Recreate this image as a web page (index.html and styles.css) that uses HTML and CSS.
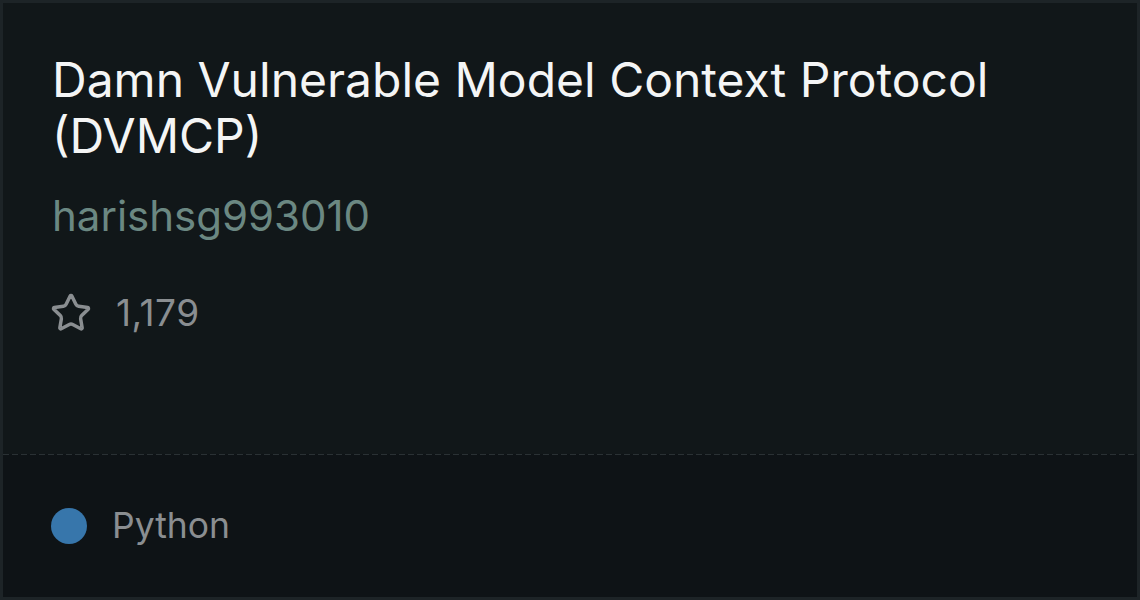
FILE: index.html
```html
<!DOCTYPE html>
<html>
<head>
<meta charset="utf-8">
<link rel="stylesheet" href="styles.css">
</head>
<body>
<div class="card">
  <div class="main">
    <h1 class="title">Damn Vulnerable Model Context Protocol (DVMCP)</h1>
    <div class="owner">harishsg993010</div>
    <div class="stars">
      <svg class="star" viewBox="0 0 24 24" width="42" height="42" fill="none" stroke="currentColor" stroke-width="2" stroke-linejoin="round" stroke-linecap="round">
        <path d="M11.525 2.295a.53.53 0 0 1 .95 0l2.31 4.679a2.123 2.123 0 0 0 1.595 1.16l5.166.756a.53.53 0 0 1 .294.904l-3.736 3.638a2.123 2.123 0 0 0-.611 1.878l.882 5.14a.53.53 0 0 1-.771.56l-4.618-2.428a2.122 2.122 0 0 0-1.973 0L6.396 21.01a.53.53 0 0 1-.77-.56l.881-5.139a2.122 2.122 0 0 0-.611-1.879L2.16 9.795a.53.53 0 0 1 .294-.906l5.165-.755a2.122 2.122 0 0 0 1.597-1.16z"/>
      </svg>
      <span class="count">1,179</span>
    </div>
  </div>
  <div class="footer">
    <span class="dot"></span>
    <span class="lang">Python</span>
  </div>
</div>
</body>
</html>
```
FILE: styles.css
```css
html, body {
  margin: 0;
  padding: 0;
  background: #1d2427;
}
.card {
  box-sizing: border-box;
  width: 1140px;
  height: 600px;
  border: 3px solid #1d2427;
  background: #111719;
  display: flex;
  flex-direction: column;
  font-family: Inter, "Noto Sans", sans-serif;
}
.main {
  flex: 1;
  padding: 49px 49px 0;
}
.title {
  margin: 0;
  font-size: 48px;
  font-weight: 400;
  line-height: 56px;
  color: #f4f5f5;
  max-width: 1000px;
}
.owner {
  margin-top: 28px;
  font-size: 42px;
  line-height: 48px;
  color: #6b8882;
}
.stars {
  margin-top: 52px;
  display: flex;
  align-items: center;
  gap: 24px;
  font-size: 37px;
  line-height: 40px;
  color: #8a8e91;
}
.star {
  display: block;
  margin-left: -2px;
}
.count {
  letter-spacing: 0.5px;
}
.footer {
  height: 143px;
  box-sizing: border-box;
  background: #0e1316;
  background-image: repeating-linear-gradient(90deg, #2a3134 0 6px, transparent 6px 9px);
  background-size: 100% 1px;
  background-repeat: no-repeat;
  display: flex;
  align-items: center;
  padding: 0 48px;
  gap: 25px;
}
.dot {
  width: 36px;
  height: 36px;
  border-radius: 50%;
  background: #3776ab;
}
.lang {
  font-size: 35.5px;
  color: #8a8e91;
}
```
